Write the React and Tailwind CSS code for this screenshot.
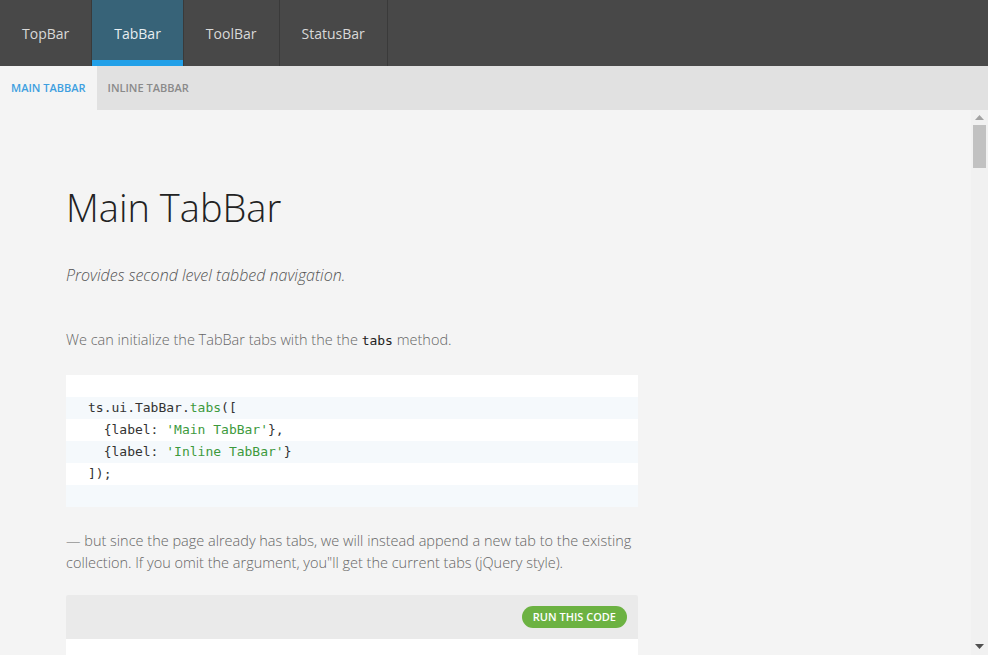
import React from "react";

const mono = { fontFamily: '"DejaVu Sans Mono", "Liberation Mono", monospace' };

function TopTab({ label, active }) {
  return (
    <div
      className={
        "relative flex h-full items-center border-r border-[#3a3a3a] px-[22px] text-[14px] " +
        (active ? "bg-[#376378] text-[#e8eef1]" : "text-[#d9d9d9]")
      }
    >
      {label}
      {active && <div className="absolute bottom-0 left-0 right-0 h-[6px] bg-[#22a0e8]" />}
    </div>
  );
}

function CodeLine({ children, shade }) {
  return (
    <div
      className={"h-[22px] whitespace-pre pl-[22px] leading-[22px] " + (shade ? "bg-[#f5f9fc]" : "bg-white")}
    >
      {children}
    </div>
  );
}

function Scrollbar() {
  return (
    <div className="flex w-[17px] shrink-0 flex-col items-center bg-[#f1f1f1]">
      <svg width="9" height="5" viewBox="0 0 9 5" className="mt-[5px]">
        <path d="M4.5 0 L9 5 L0 5 Z" fill="#a3a3a3" />
      </svg>
      <div className="mt-[5px] h-[43px] w-[13px] bg-[#c1c1c1]" />
      <div className="flex-1" />
      <svg width="9" height="5" viewBox="0 0 9 5" className="mb-[6px]">
        <path d="M0 0 L9 0 L4.5 5 Z" fill="#505050" />
      </svg>
    </div>
  );
}

export default function App() {
  return (
    <div
      className="flex h-[655px] w-[988px] flex-col overflow-hidden bg-[#f4f4f4]"
      style={{ fontFamily: '"Open Sans", "Noto Sans", sans-serif' }}
    >
      <div className="flex h-[66px] shrink-0 bg-[#484848]">
        <TopTab label="TopBar" />
        <TopTab label="TabBar" active />
        <TopTab label="ToolBar" />
        <TopTab label="StatusBar" />
      </div>
      <div className="flex h-[44px] shrink-0 bg-[#e1e1e1] text-[11px] font-semibold uppercase">
        <div className="flex items-center bg-[#f4f4f4] px-[11px] text-[#3e9fe0]">Main TabBar</div>
        <div className="flex items-center px-[11px] text-[#8a8a8a]">Inline TabBar</div>
      </div>
      <div className="flex min-h-0 flex-1">
        <div className="min-w-0 flex-1 overflow-hidden pl-[66px] pt-[73px]">
          <div className="w-[572px]">
            <h1 className="text-[38px] font-light leading-[48px] text-[#222]">Main TabBar</h1>
            <p className="mt-[33px] text-[16px] font-light italic leading-[22px] text-[#555]">
              Provides second level tabbed navigation.
            </p>
            <p className="mt-[43px] text-[14.5px] font-light leading-[22px] text-[#666]">
              We can initialize the TabBar tabs with the the{" "}
              <span className="text-[13px] text-[#222]" style={mono}>tabs</span> method.
            </p>
            <div className="mt-[23px] rounded-[2px] bg-white text-[13px] text-[#333]" style={mono}>
              <CodeLine />
              <CodeLine shade>
                ts.ui.TabBar.<span className="text-[#3d9a3d]">tabs</span>([
              </CodeLine>
              <CodeLine>
                {"  {label: "}
                <span className="text-[#3d9a3d]">'Main TabBar'</span>
                {"},"}
              </CodeLine>
              <CodeLine shade>
                {"  {label: "}
                <span className="text-[#3d9a3d]">'Inline TabBar'</span>
                {"}"}
              </CodeLine>
              <CodeLine>]);</CodeLine>
              <CodeLine shade />
            </div>
            <p className="mt-[23px] text-[14.5px] font-light leading-[22px] text-[#666]">
              — but since the page already has tabs, we will instead append a new tab to the existing
              collection. If you omit the argument, you"ll get the current tabs (jQuery style).
            </p>
            <div className="mt-[21px] overflow-hidden rounded-[2px]">
              <div className="flex h-[44px] items-center justify-end bg-[#eaeaea] pr-[11px]">
                <div className="flex h-[22px] items-center rounded-full bg-[#6cb242] px-[11px] text-[11px] font-semibold text-white">
                  RUN THIS CODE
                </div>
              </div>
              <div className="h-[200px] bg-white" />
            </div>
          </div>
        </div>
        <Scrollbar />
      </div>
    </div>
  );
}
